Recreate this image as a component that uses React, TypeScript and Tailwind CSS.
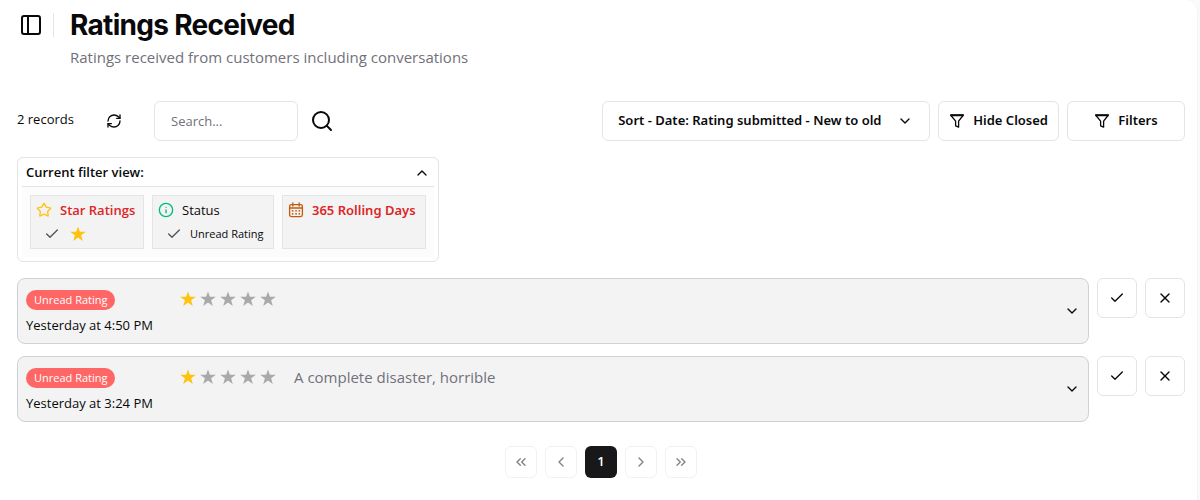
import {
  Check,
  ChevronDown,
  ChevronLeft,
  ChevronRight,
  ChevronsLeft,
  ChevronsRight,
  ChevronUp,
  Info,
  PanelLeft,
  RefreshCw,
  Search,
  Star,
  X,
} from "lucide-react";
import type { ReactNode } from "react";

type Rating = { id: number; status: string; when: string; stars: number; comment?: string };

const ratings: Rating[] = [
  { id: 1, status: "Unread Rating", when: "Yesterday at 4:50 PM", stars: 1 },
  { id: 2, status: "Unread Rating", when: "Yesterday at 3:24 PM", stars: 1, comment: "A complete disaster, horrible" },
];

function SolidStar({ className }: { className: string }) {
  return (
    <svg viewBox="0 0 16 16" aria-hidden="true" className={className} fill="currentColor">
      <path d="M8 0.4 9.9 5.8H15.8L11.1 9.3 12.8 15 8 11.6 3.2 15 4.9 9.3 0.2 5.8H6.1Z" />
    </svg>
  );
}

function FunnelIcon() {
  return (
    <svg viewBox="0 0 16 16" aria-hidden="true" className="size-4" fill="none" stroke="currentColor" strokeWidth="1.3" strokeLinejoin="round">
      <path d="M1.6 2H14.4L9.6 8.2V14.2L6.6 12.8V8.2Z" />
      <path d="M1.6 2.4H14.4" strokeWidth="1.7" />
    </svg>
  );
}

function CalendarIcon() {
  return (
    <svg viewBox="0 0 16 16" aria-hidden="true" className="size-4 text-[#c2590c]" fill="none" stroke="currentColor" strokeWidth="1.3" strokeLinecap="round">
      <rect x="1.6" y="2.6" width="12.8" height="12" rx="1.8" />
      <path d="M1.6 6H14.4M4.8 1V4M11.2 1V4" />
      <path d="M4.6 8.8H4.7M8 8.8H8.1M11.3 8.8H11.4M4.6 11.8H4.7M8 11.8H8.1M11.3 11.8H11.4" strokeWidth="1.7" />
    </svg>
  );
}

function SquareButton({ label, children }: { label: string; children: ReactNode }) {
  return (
    <button type="button" aria-label={label} className="flex size-10 shrink-0 items-center justify-center rounded-md border border-zinc-200 bg-white">
      {children}
    </button>
  );
}

function PageButton({ label, children }: { label: string; children: ReactNode }) {
  return (
    <button type="button" disabled aria-label={label} className="flex size-8 items-center justify-center rounded-md border border-zinc-200 bg-white opacity-50">
      {children}
    </button>
  );
}

function FilterCard({ width, children }: { width: string; children: ReactNode }) {
  return <div className={`border border-zinc-200 bg-[#f3f3f3] py-1 pr-1 pl-[5px] ${width}`}>{children}</div>;
}

function RatingRow({ rating }: { rating: Rating }) {
  return (
    <li className="flex items-start gap-2">
      <button type="button" className="flex min-w-0 grow items-center rounded-lg border border-[#d0d0d8] bg-[#f3f3f3] p-2 text-left">
        <span className="flex grow items-start">
          <span className="flex w-[154px] shrink-0 flex-col items-start pt-[3px]">
            <span className="rounded-full bg-[#ff6666] px-2 text-[11px] leading-5 text-white">{rating.status}</span>
            <span className="mt-[5px] text-[13px] leading-5">{rating.when}</span>
          </span>
          <span className="flex h-6 items-center gap-1" role="img" aria-label={`${rating.stars} of 5 stars`}>
            {[1, 2, 3, 4, 5].map((n) => (
              <SolidStar key={n} className={n <= rating.stars ? "size-4 text-[#ffc20e]" : "size-4 text-[#a9a9a9]"} />
            ))}
          </span>
          {rating.comment && <span className="ml-[18px] text-[15px] leading-6 text-zinc-500">{rating.comment}</span>}
        </span>
        <ChevronDown className="size-4" />
      </button>
      <SquareButton label="Mark as read">
        <Check className="size-4" />
      </SquareButton>
      <SquareButton label="Close rating">
        <X className="size-4" />
      </SquareButton>
    </li>
  );
}

export default function App() {
  return (
    <div className="min-h-screen bg-[#fafafa] pr-[2px] font-['Open_Sans','Noto_Sans',sans-serif] text-zinc-950">
      <main className="min-h-screen rounded-tr-xl border-r border-zinc-100 bg-white pr-3 pb-5 pl-[17px]">
        <header className="flex items-start pt-2">
          <button type="button" aria-label="Toggle sidebar" className="mt-[5px] ml-[2px]">
            <PanelLeft className="size-6" />
          </button>
          <span className="mt-[5px] ml-[10px] h-6 w-px bg-zinc-200" />
          <div className="ml-4">
            <h1 className="font-['Inter',sans-serif] text-[28px] leading-[34px] font-bold tracking-tight">Ratings Received</h1>
            <p className="mt-[3px] text-[15px] leading-6 text-zinc-500">Ratings received from customers including conversations</p>
          </div>
        </header>

        <div className="mt-8 flex items-center">
          <p className="w-[89px] pb-1 text-[13px] leading-5">2 records</p>
          <button type="button" aria-label="Refresh">
            <RefreshCw className="size-4" />
          </button>
          <input type="search" aria-label="Search ratings" placeholder="Search..." className="ml-8 h-10 w-36 rounded-md border border-zinc-200 px-4 text-[13px] placeholder:text-zinc-500" />
          <button type="button" aria-label="Search" className="ml-3">
            <Search className="size-6" />
          </button>
          <div className="ml-auto flex gap-2 font-['Noto_Sans',sans-serif] text-[13px] font-semibold">
            <button type="button" className="flex h-10 min-w-[328px] items-center justify-between gap-2 rounded-md border border-zinc-200 pr-4 pl-[15px]">
              Sort - Date: Rating submitted - New to old
              <ChevronDown className="size-4" />
            </button>
            <button type="button" className="flex h-10 items-center gap-2 rounded-md border border-zinc-200 px-[10px]">
              <FunnelIcon />
              Hide Closed
            </button>
            <button type="button" className="flex h-10 w-[118px] items-center justify-center gap-2 rounded-md border border-zinc-200">
              <FunnelIcon />
              Filters
            </button>
          </div>
        </div>

        <section className="mt-4 w-fit rounded-md border border-zinc-200 p-1">
          <button type="button" className="flex h-[25px] w-full items-center justify-between border-b border-zinc-200 px-1 pb-0.5 text-[13px] font-semibold">
            Current filter view:
            <ChevronUp className="size-4" />
          </button>
          <div className="flex gap-2 bg-[#fcfcfc] p-2">
            <FilterCard width="min-w-[114px]">
              <p className="flex items-center gap-2 text-[13px] leading-5 font-semibold text-[#dc2626]">
                <Star className="size-4 text-[#ffc20e]" />
                Star Ratings
              </p>
              <p className="mt-1 flex h-5 items-center gap-2.5 pl-2">
                <Check className="size-4 text-zinc-600" />
                <SolidStar className="size-4 text-[#ffc20e]" />
              </p>
            </FilterCard>
            <FilterCard width="min-w-[122px]">
              <p className="flex items-center gap-2 text-[13px] leading-5">
                <Info className="size-4 text-emerald-500" />
                Status
              </p>
              <p className="mt-1 flex h-5 items-center gap-2 pl-2 text-[11px]">
                <Check className="size-4 text-zinc-600" />
                Unread Rating
              </p>
            </FilterCard>
            <FilterCard width="min-w-[144px]">
              <p className="flex items-center gap-2 font-['Noto_Sans',sans-serif] text-[13px] leading-5 font-semibold text-[#dc2626]">
                <CalendarIcon />
                365 Rolling Days
              </p>
            </FilterCard>
          </div>
        </section>

        <ul className="mt-4 flex flex-col gap-3">
          {ratings.map((r) => (
            <RatingRow key={r.id} rating={r} />
          ))}
        </ul>

        <nav aria-label="Pagination" className="mt-6 flex justify-center gap-2">
          <PageButton label="First page">
            <ChevronsLeft className="size-4" />
          </PageButton>
          <PageButton label="Previous page">
            <ChevronLeft className="size-4" />
          </PageButton>
          <button type="button" aria-current="page" className="size-8 rounded-md bg-zinc-900 text-[13px] font-semibold text-white">
            1
          </button>
          <PageButton label="Next page">
            <ChevronRight className="size-4" />
          </PageButton>
          <PageButton label="Last page">
            <ChevronsRight className="size-4" />
          </PageButton>
        </nav>
      </main>
    </div>
  );
}
